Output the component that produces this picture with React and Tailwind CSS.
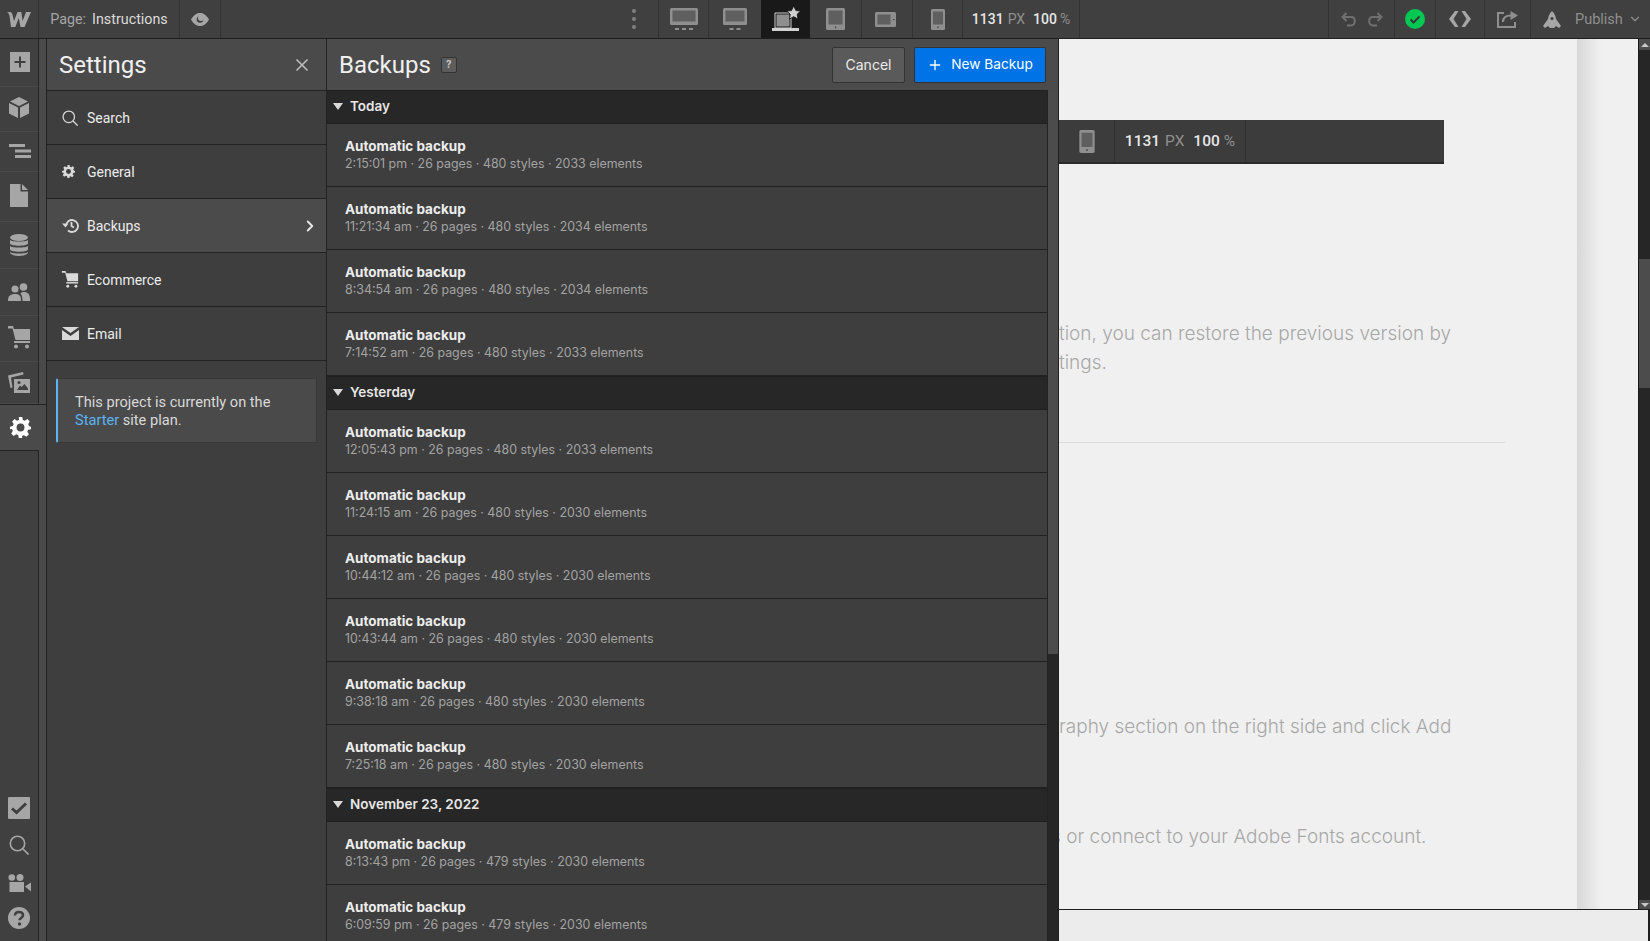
import { ChevronDown, ChevronRight, Plus, X } from "lucide-react";

const railTop = [
  { h: "h-[48px]", pad: "pb-[2px] pl-[2px]", icon: <AddIcon /> },
  { h: "h-[45px]", pad: "pb-[3px]", icon: <BoxIcon /> },
  { h: "h-[40px]", pad: "pb-[2px] pl-[1px]", icon: <NavIcon /> },
  { h: "h-[50px]", pad: "pb-[3px]", icon: <PageIcon /> },
  { h: "h-[47px]", pad: "", icon: <DbIcon /> },
  { h: "h-[47px]", pad: "pb-[1px]", icon: <UsersIcon /> },
  { h: "h-[46px]", pad: "pb-[2px]", icon: <CartIcon className="w-[22px] h-[23px]" /> },
  { h: "h-[42px]", pad: "", icon: <AssetsIcon /> }
];

const railBottom = [
  { h: "h-[37px]", icon: <CheckBoxIcon /> },
  { h: "h-[37px]", icon: <SearchIcon className="w-[20px] h-[20px]" /> },
  { h: "h-[40px]", icon: <VideoIcon /> },
  { h: "h-[29px]", icon: <HelpIcon /> }
];

const sections = [
  {
    title: "Today",
    rows: [
      "2:15:01 pm · 26 pages · 480 styles · 2033 elements",
      "11:21:34 am · 26 pages · 480 styles · 2034 elements",
      "8:34:54 am · 26 pages · 480 styles · 2034 elements",
      "7:14:52 am · 26 pages · 480 styles · 2033 elements"
    ]
  },
  {
    title: "Yesterday",
    rows: [
      "12:05:43 pm · 26 pages · 480 styles · 2033 elements",
      "11:24:15 am · 26 pages · 480 styles · 2030 elements",
      "10:44:12 am · 26 pages · 480 styles · 2030 elements",
      "10:43:44 am · 26 pages · 480 styles · 2030 elements",
      "9:38:18 am · 26 pages · 480 styles · 2030 elements",
      "7:25:18 am · 26 pages · 480 styles · 2030 elements"
    ]
  },
  {
    title: "November 23, 2022",
    rows: [
      "8:13:43 pm · 26 pages · 479 styles · 2030 elements",
      "6:09:59 pm · 26 pages · 479 styles · 2030 elements"
    ]
  }
];

function AddIcon() {
  return (
    <svg viewBox="0 0 20 20" className="w-[20px] h-[20px]">
      <rect width="20" height="20" fill="#a6a6a6" />
      <path d="M10 4.500v11M4.500 10h11" stroke="#404040" strokeWidth="2" />
    </svg>
  );
}

function BoxIcon() {
  return (
    <svg viewBox="0 0 20 21" className="w-[20px] h-[21px]" fill="#a6a6a6">
      <path d="M10 0l9 4.500-9 4.500-9-4.500z" />
      <path d="M0 6l9 4.500V21l-9-4.500zM20 6l-9 4.500V21l9-4.500z" />
    </svg>
  );
}

function NavIcon() {
  return (
    <svg viewBox="0 0 22 14" className="w-[22px] h-[14px]" fill="#a6a6a6">
      <rect x="0" y="0" width="16" height="3" />
      <rect x="6" y="5.500" width="16" height="3" />
      <rect x="6" y="11" width="16" height="3" />
    </svg>
  );
}

function PageIcon() {
  return (
    <svg viewBox="0 0 18 23" className="w-[18px] h-[23px]" fill="#a6a6a6">
      <path d="M0 0h10.500v7.500H18V23H0z" />
      <path d="M12 0l6 6h-6z" />
    </svg>
  );
}

function DbIcon() {
  return (
    <svg viewBox="0 0 18 22" className="w-[18px] h-[22px]" fill="#a6a6a6">
      <ellipse cx="9" cy="3.500" rx="9" ry="3.500" />
      <path d="M0 6c2 2 16 2 18 0v3.500c-1 3-17 3-18 0zM0 12c2 2 16 2 18 0v3.500c-1 3-17 3-18 0zM0 18c2 2 16 2 18 0v.5c-1 4.500-17 4.500-18 0z" />
    </svg>
  );
}

function UsersIcon() {
  return (
    <svg viewBox="0 0 22 18" className="w-[22px] h-[18px]" fill="#a6a6a6">
      <circle cx="7" cy="6" r="3.500" />
      <circle cx="15.500" cy="4" r="3.800" />
      <path d="M0 18c0-5 2-7 7-7s6 2 6 7zM14.500 18c0-3-.5-6-2-7.500 1-1.500 2.500-1.500 3-1.500 4.500 0 6.500 2.500 6.500 7v2z" />
    </svg>
  );
}

function CartIcon({ className, fill = "#a6a6a6" }) {
  return (
    <svg viewBox="0 0 22 23" className={className} fill={fill}>
      <path d="M0 0h5l1 3h16v11H7.500L4.500 2.500H0z" />
      <rect x="6" y="15" width="16" height="2" />
      <circle cx="8" cy="20.500" r="2" />
      <circle cx="19" cy="20.500" r="2" />
    </svg>
  );
}

function AssetsIcon() {
  return (
    <svg viewBox="0 0 22 21" className="w-[22px] h-[21px]" fill="#a6a6a6">
      <path d="M0 3.500L15 0l.6 2.500L3 5.500l1.500 10-2 .5z" />
      <path d="M6 7h16v14H6zM9 18h11v-1.500L16.500 12l-3 3-1.500-1.500z" fillRule="evenodd" />
      <circle cx="11" cy="10.500" r="1.500" fill="#404040" />
    </svg>
  );
}

function GearIcon({ className, fill = "#fff", hole = "#4a4a4a" }) {
  return (
    <svg viewBox="0 0 24 24" className={className}>
      <path
        fill={fill}
        d="M10 0h4l.7 3.300 2.200.9L19.800 2.400l2.800 2.800-1.800 2.900.9 2.200L24 11v3l-3.300.7-.9 2.200 1.800 2.900-2.800 2.800-2.900-1.800-2.200.9L14 24h-4l-.7-3.300-2.200-.9-2.900 1.800-2.800-2.800 1.800-2.900-.9-2.200L0 14v-3l3.300-.7.9-2.200-1.800-2.900 2.800-2.800 2.900 1.800 2.200-.9z"
      />
      <circle cx="12" cy="12" r="4.500" fill={hole} />
    </svg>
  );
}

function CheckBoxIcon() {
  return (
    <svg viewBox="0 0 22 22" className="w-[22px] h-[22px]">
      <rect width="22" height="22" rx="1" fill="#a6a6a6" />
      <path d="M4 11.500l4.500 4L18 6.500" fill="none" stroke="#404040" strokeWidth="3" />
    </svg>
  );
}

function SearchIcon({ className, stroke = "#a6a6a6" }) {
  return (
    <svg viewBox="0 0 20 20" className={className} fill="none" stroke={stroke} strokeWidth="1.600">
      <circle cx="8.500" cy="8.500" r="7.200" />
      <path d="M13.800 13.800L19.500 19.500" />
    </svg>
  );
}

function VideoIcon() {
  return (
    <svg viewBox="0 0 23 18" className="w-[23px] h-[18px]" fill="#a6a6a6">
      <circle cx="3.800" cy="3.500" r="3.300" />
      <circle cx="12" cy="3.500" r="3.500" />
      <rect x="1.500" y="8" width="14.500" height="10" />
      <path d="M17 12.500l6-4v9z" />
    </svg>
  );
}

function HelpIcon() {
  return (
    <svg viewBox="0 0 22 22" className="w-[22px] h-[22px]">
      <circle cx="11" cy="11" r="11" fill="#a6a6a6" />
      <path d="M7 8.500C7 6 9 5 11 5s4 1 4 3.300c0 2.700-3.500 2.700-3.500 5" fill="none" stroke="#404040" strokeWidth="2.500" />
      <circle cx="11.500" cy="17" r="1.700" fill="#404040" />
    </svg>
  );
}

function WebflowLogo() {
  return (
    <svg viewBox="0 0 24 16" className="w-[24px] h-[16px]" fill="#a6a6a6">
      <path d="M0 1.500c2-1 4.800-1 5.300 1.500l1.700 7L10.500 1h3.800l1.300 9 3.400-9H24l-6.500 15h-4l-1.700-9-3.500 9H4L2.500 5C2.200 3 1.500 2 0 1.500z" />
    </svg>
  );
}

function EyeIcon() {
  return (
    <svg viewBox="0 0 18 13" className="w-[18px] h-[13px]">
      <path d="M0 6.500C3 1.500 6 0 9 0s6 1.500 9 6.500C15 11.500 12 13 9 13S3 11.500 0 6.500z" fill="#a6a6a6" />
      <circle cx="9" cy="6.500" r="3.300" fill="#404040" />
      <circle cx="10" cy="5" r="3" fill="#a6a6a6" />
    </svg>
  );
}

function DesktopLargeIcon() {
  return (
    <svg viewBox="0 0 28 22" className="w-[28px] h-[22px]">
      <rect width="28" height="17" rx="1.500" fill="#8f8f8f" />
      <rect x="2.500" y="2.500" width="23" height="11" fill="#5f5f5f" />
      <path d="M5 20h4v2H5zM12 20h4v2h-4zM19 20h4v2h-4z" fill="#8f8f8f" />
    </svg>
  );
}

function DesktopIcon() {
  return (
    <svg viewBox="0 0 24 22" className="w-[24px] h-[22px]">
      <rect width="24" height="17" rx="1.500" fill="#8f8f8f" />
      <rect x="2.500" y="2.500" width="19" height="11" fill="#5f5f5f" />
      <path d="M6.500 20h4v2h-4zM13.500 20h4v2h-4z" fill="#8f8f8f" />
    </svg>
  );
}

function LaptopStarIcon() {
  return (
    <svg viewBox="0 0 28 26" className="w-[28px] h-[26px]">
      <path d="M3 7h16v15H3z" fill="none" stroke="#d0d0d0" strokeWidth="1" />
      <rect x="4.500" y="8.500" width="13" height="12" fill="#8f8f8f" />
      <rect y="22" width="27" height="3" fill="#d0d0d0" />
      <path d="M22 0l2.600 5.400 5.400.6-4 3.800 1.100 5.600-5.100-2.900-5.100 2.900 1.100-5.600-4-3.800 5.400-.6z" fill="#d0d0d0" stroke="#191919" strokeWidth="1" transform="translate(3 0) scale(.85)" />
    </svg>
  );
}

function TabletIcon({ className = "w-[19px] h-[22px]" }) {
  return (
    <svg viewBox="0 0 19 22" className={className}>
      <rect width="19" height="22" rx="1.500" fill="#8f8f8f" />
      <rect x="2.500" y="2.500" width="14" height="14" fill="#5f5f5f" />
      <rect x="9" y="18.500" width="1.200" height="1.800" fill="#404040" />
    </svg>
  );
}

function TabletLandIcon() {
  return (
    <svg viewBox="0 0 21 15" className="w-[21px] h-[15px]">
      <rect width="21" height="15" rx="1.500" fill="#8f8f8f" />
      <rect x="2.500" y="2.500" width="13" height="10" fill="#5f5f5f" />
      <rect x="18" y="7" width="1.500" height="1.200" fill="#404040" />
    </svg>
  );
}

function PhoneIcon({ className = "w-[14px] h-[21px]" }) {
  return (
    <svg viewBox="0 0 14 21" className={className}>
      <rect width="14" height="21" rx="1.500" fill="#8f8f8f" />
      <rect x="2" y="2.500" width="10" height="13" fill="#5f5f5f" />
      <rect x="6.400" y="17.500" width="1.200" height="1.600" fill="#404040" />
    </svg>
  );
}

function CodeIcon() {
  return (
    <svg viewBox="0 0 22 16" className="w-[22px] h-[16px]" fill="#a6a6a6">
      <path d="M6 0h3.500L4.500 8l5 8H6L0 8zM16 0h-3.500l5 8-5 8H16l6-8z" />
    </svg>
  );
}

function ShareIcon() {
  return (
    <svg viewBox="0 0 21 17" className="w-[21px] h-[17px]" fill="none" stroke="#8f8f8f" strokeWidth="2">
      <path d="M7 2H1v14h17v-5" />
      <path d="M6 11c0-4 3-6.500 8-6.500" strokeWidth="2.200" />
      <path d="M13.500 0L21 4.500 13.500 9z" fill="#8f8f8f" stroke="none" />
    </svg>
  );
}

function RocketIcon() {
  return (
    <svg viewBox="0 0 18 17" className="w-[18px] h-[17px]" fill="#a6a6a6">
      <path d="M9 0c2.500 2 3.500 5 4 8l5 7-2 2-3-2-2 2H7l-2-2-3 2-2-2 5-7c.5-3 1.500-6 4-8z" />
      <circle cx="9" cy="7.500" r="1.600" fill="#404040" />
    </svg>
  );
}

function UndoIcon({ flip }) {
  return (
    <svg viewBox="0 0 15 15" className={flip ? "w-[15px] h-[15px] -scale-x-100" : "w-[15px] h-[15px]"} fill="none" stroke="#707070" strokeWidth="2">
      <path d="M2 5h8c2.500 0 3.800 1.700 3.800 4s-1.300 4.500-3.800 4.500H6" />
      <path d="M5.500 1L1.500 5l4 4" />
    </svg>
  );
}

function HistoryIcon() {
  return (
    <svg viewBox="0 0 17 15" className="w-[17px] h-[15px]" fill="none" stroke="#d9d9d9" strokeWidth="1.800">
      <path d="M4 7.500a6 6 0 1 1 2 5" />
      <path d="M9.500 4v4l2.500 1.500" />
      <path d="M0 5.500h6.500L3.500 9.500z" fill="#d9d9d9" stroke="none" />
    </svg>
  );
}

function MailIcon() {
  return (
    <svg viewBox="0 0 17 13" className="w-[17px] h-[13px]" fill="#d9d9d9">
      <path d="M0 0h17L8.500 6z" />
      <path d="M0 3l8.500 6L17 3v10H0z" />
    </svg>
  );
}

function RailCell({ h, pad, icon }) {
  return (
    <div className={`${h} ${pad} w-[39px] shrink-0 flex items-center justify-center border-b border-r border-b-[#4a4a4a] border-r-[#222] bg-[#404040]`}>
      {icon}
    </div>
  );
}

function ToolCell({ className, children }) {
  return (
    <div className={`flex h-full shrink-0 items-center justify-center border-r border-[#333] ${className}`}>
      {children}
    </div>
  );
}

function MenuRow({ icon, label, active }) {
  return (
    <div className={`flex h-[54px] items-center border-b border-[#222] pl-[10px] ${active ? "bg-[#4b4b4b]" : ""}`}>
      <div className="flex w-[30px] shrink-0 items-center justify-center pr-[4px]">{icon}</div>
      <span className="pt-[1px] text-[14px] text-[#ececec]">{label}</span>
      {active && <ChevronRight size={18} strokeWidth={2.500} className="ml-auto mr-[7px] text-[#e6e6e6]" />}
    </div>
  );
}

function SectionHeader({ title }) {
  return (
    <div className="flex h-[34px] shrink-0 items-center border-y border-[#1f1f1f] bg-[#272727] pb-[1px] pl-[6px]">
      <svg viewBox="0 0 10 7" className="mr-[7px] h-[7px] w-[10px]" fill="#d9d9d9">
        <path d="M0 0h10L5 7z" />
      </svg>
      <span className="text-[13.500px] font-semibold text-[#e6e6e6]">{title}</span>
    </div>
  );
}

function BackupRow({ meta }) {
  return (
    <div className="flex h-[63px] shrink-0 flex-col justify-center border-b border-[#222] pl-[18px]">
      <div className="text-[13.500px] leading-[18px] font-bold text-[#ededed]">Automatic backup</div>
      <div className="text-[12.400px] leading-[18px] text-[#a3a3a3]">{meta}</div>
    </div>
  );
}

export default function App() {
  return (
    <div className="flex h-screen w-full flex-col overflow-hidden bg-[#f0f0f0] font-['Roboto',sans-serif]">
      {/* top bar */}
      <div className="flex h-[39px] shrink-0 items-center border-b border-[#1f1f1f] bg-[#404040]">
        <ToolCell className="w-[39px]"><WebflowLogo /></ToolCell>
        <ToolCell className="w-[141px] pt-[1px] text-[14.300px]">
          <span className="text-[#a6a6a6]">Page:</span>
          <span className="ml-[6px] text-[#dcdcdc]">Instructions</span>
        </ToolCell>
        <ToolCell className="w-[41px]"><EyeIcon /></ToolCell>
        <div className="flex h-full w-[437px] shrink-0 items-center justify-end pr-[22px]">
          <div className="flex flex-col gap-[4px]">
            <span className="h-[4px] w-[4px] rounded-full bg-[#808080]" />
            <span className="h-[4px] w-[4px] rounded-full bg-[#808080]" />
            <span className="h-[4px] w-[4px] rounded-full bg-[#808080]" />
          </div>
        </div>
        <div className="h-full w-px shrink-0 bg-[#333]" />
        <ToolCell className="w-[50px]"><DesktopLargeIcon /></ToolCell>
        <ToolCell className="w-[52px] border-r-0"><DesktopIcon /></ToolCell>
        <ToolCell className="w-[49px] bg-[#191919] border-r-0"><LaptopStarIcon /></ToolCell>
        <ToolCell className="w-[52px]"><TabletIcon /></ToolCell>
        <ToolCell className="w-[51px] pr-[3px]"><TabletLandIcon /></ToolCell>
        <ToolCell className="w-[50px]"><PhoneIcon /></ToolCell>
        <ToolCell className="w-[117px] text-[14px] font-medium">
          <span className="text-[#e6e6e6]">1131</span>
          <span className="ml-[4px] font-normal text-[#8f8f8f]">PX</span>
          <span className="ml-[8px] text-[#e6e6e6]">100</span>
          <span className="ml-[3px] font-normal text-[#8f8f8f]">%</span>
        </ToolCell>
        <div className="flex-1" />
        <div className="h-full w-px shrink-0 bg-[#333]" />
        <ToolCell className="w-[66px] gap-[12px]">
          <UndoIcon />
          <UndoIcon flip />
        </ToolCell>
        <ToolCell className="w-[41px]">
          <svg viewBox="0 0 20 20" className="h-[20px] w-[20px]">
            <circle cx="10" cy="10" r="10" fill="#00c853" />
            <path d="M5.500 10.500l3 3 6-6" fill="none" stroke="#2e3a35" strokeWidth="2" />
          </svg>
        </ToolCell>
        <ToolCell className="w-[49px]"><CodeIcon /></ToolCell>
        <ToolCell className="w-[46px]"><ShareIcon /></ToolCell>
        <div className="flex h-full w-[119px] shrink-0 items-center pl-[12px]">
          <RocketIcon />
          <span className="ml-[14px] pt-[1px] text-[14.500px] text-[#8f8f8f]">Publish</span>
          <ChevronDown size={14} strokeWidth={2} className="ml-[5px] text-[#8f8f8f]" />
        </div>
      </div>

      <div className="flex min-h-0 flex-1">
        {/* left rail */}
        <div className="flex w-[46px] shrink-0 flex-col bg-[#4a4a4a]">
          {railTop.map((item, i) => (
            <RailCell key={i} h={item.h} pad={item.pad} icon={item.icon} />
          ))}
          <div className="flex h-[46px] shrink-0 items-center justify-center border-t border-[#222] pr-[6px]">
            <GearIcon className="h-[21px] w-[21px]" />
          </div>
          <div className="flex w-[39px] flex-1 flex-col justify-end border-t border-r border-[#222] bg-[#404040] pb-[9px]">
            {railBottom.map((item, i) => (
              <div key={i} className={`${item.h} flex shrink-0 items-center justify-center`}>
                {item.icon}
              </div>
            ))}
          </div>
        </div>

        {/* settings panel */}
        <div className="flex w-[281px] shrink-0 flex-col border-x border-[#222] bg-[#3e3e3e]">
          <div className="flex h-[52px] shrink-0 items-center justify-between border-b border-[#222] bg-[#4a4a4a] pl-[12px] pr-[14px]">
            <span className="text-[24px] text-[#f0f0f0]">Settings</span>
            <X size={20} strokeWidth={2} className="text-[#bdbdbd]" />
          </div>
          <MenuRow label="Search" icon={<SearchIcon className="h-[16px] w-[16px]" stroke="#d9d9d9" />} />
          <MenuRow label="General" icon={<GearIcon className="h-[13px] w-[13px] -translate-x-[2px]" fill="#d9d9d9" hole="#3e3e3e" />} />
          <MenuRow label="Backups" active icon={<HistoryIcon />} />
          <MenuRow label="Ecommerce" icon={<CartIcon className="h-[17px] w-[18px]" fill="#d9d9d9" />} />
          <MenuRow label="Email" icon={<MailIcon />} />
          <div className="mx-[9px] mt-[17px] h-[65px] rounded-[2px] border border-l-2 border-[#383838] border-l-[#5ab4f5] bg-[#4a4a4a] pl-[17px] pt-[14px] text-[14.600px] leading-[18px] text-[#d9d9d9]">
            This project is currently on the
            <br />
            <span className="text-[#5ab4f5]">Starter</span> site plan.
          </div>
        </div>

        {/* backups panel */}
        <div className="flex w-[732px] shrink-0 flex-col border-r border-[#1f1f1f] bg-[#3e3e3e] font-['Inter',sans-serif]">
          <div className="flex h-[51px] shrink-0 items-center bg-[#4b4b4b] pl-[12px] pr-[12px]">
            <span className="text-[24px] text-[#f0f0f0] font-['Roboto',sans-serif]">Backups</span>
            <span className="ml-[10px] flex h-[16px] w-[16px] items-center justify-center rounded-[2px] border border-[#333] bg-[#5c5c5c] text-[10px] font-bold text-[#c4c4c4]">?</span>
            <button className="ml-auto h-[36px] w-[73px] rounded-[2px] border border-[#333] bg-[#5a5a5a] text-[14px] text-[#ececec]">Cancel</button>
            <button className="ml-[9px] flex h-[36px] w-[132px] items-center justify-center rounded-[2px] border border-[#333] bg-[#0073e6] text-[13.700px] text-white">
              <Plus size={16} strokeWidth={2} className="mr-[8px]" />
              New Backup
            </button>
          </div>
          <div className="flex min-h-0 flex-1">
            <div className="min-w-0 flex-1 overflow-hidden border-r border-[#222]">
              {sections.map((section) => (
                <div key={section.title}>
                  <SectionHeader title={section.title} />
                  {section.rows.map((meta) => (
                    <BackupRow key={meta} meta={meta} />
                  ))}
                </div>
              ))}
            </div>
            <div className="w-[10px] shrink-0 bg-[#262626]">
              <div className="h-[564px] bg-[#4c4c4c]" />
            </div>
          </div>
        </div>

        {/* canvas */}
        <div className="flex min-w-0 flex-1 flex-col">
          <div className="flex min-h-0 flex-1">
            <div className="w-[518px] shrink-0 overflow-hidden font-['Inter',sans-serif] text-[19px] font-light text-[#a8a8a8]">
              <div className="mt-[81px] flex h-[44px] w-[385px] items-center border-b-2 border-[#2a2a2a] bg-[#3c3c3c] font-['Roboto',sans-serif]">
                <div className="flex h-full w-[56px] items-center justify-center border-r border-[#333]">
                  <PhoneIcon className="h-[23px] w-[16px]" />
                </div>
                <div className="flex h-full w-[131px] items-center justify-center border-r border-[#333] pt-[2px] text-[15.500px] font-medium">
                  <span className="text-[#e6e6e6]">1131</span>
                  <span className="ml-[5px] font-normal text-[#8f8f8f]">PX</span>
                  <span className="ml-[9px] text-[#e6e6e6]">100</span>
                  <span className="ml-[4px] font-normal text-[#8f8f8f]">%</span>
                </div>
              </div>
              <div className="mt-[155px] leading-[29px]">
                <p className="whitespace-nowrap">tion, you can restore the previous version by</p>
                <p>tings.</p>
              </div>
              <div className="mt-[65px] h-px w-[446px] bg-[#dcdcdc]" />
              <p className="mt-[269px] whitespace-nowrap leading-[29px]">raphy section on the right side and click Add</p>
              <p className="mt-[81px] -ml-[8px] whitespace-nowrap leading-[29px]">s or connect to your Adobe Fonts account.</p>
            </div>
            <div className="w-[61px] shrink-0 bg-gradient-to-r from-[#d8d8d8] via-[#f0f0f0] via-40% to-[#f0f0f0]" />
            <div className="flex w-[12px] shrink-0 flex-col border-l border-[#1a1a1a] bg-[#262626]">
              <div className="flex h-[11px] shrink-0 items-center justify-center bg-[#4c4c4c]">
                <span className="h-0 w-0 border-x-[4px] border-b-[4px] border-x-transparent border-b-[#c8c8c8]" />
              </div>
              <div className="mt-[209px] h-[129px] bg-[#4c4c4c]" />
              <div className="mt-auto flex h-[9px] items-center justify-center bg-[#4c4c4c]">
                <span className="h-0 w-0 border-x-[4px] border-t-[4px] border-x-transparent border-t-[#c8c8c8]" />
              </div>
            </div>
          </div>
          <div className="h-[32px] shrink-0 border-t border-r-2 border-[#1f1f1f] bg-[#ececec]" />
        </div>
      </div>
    </div>
  );
}
